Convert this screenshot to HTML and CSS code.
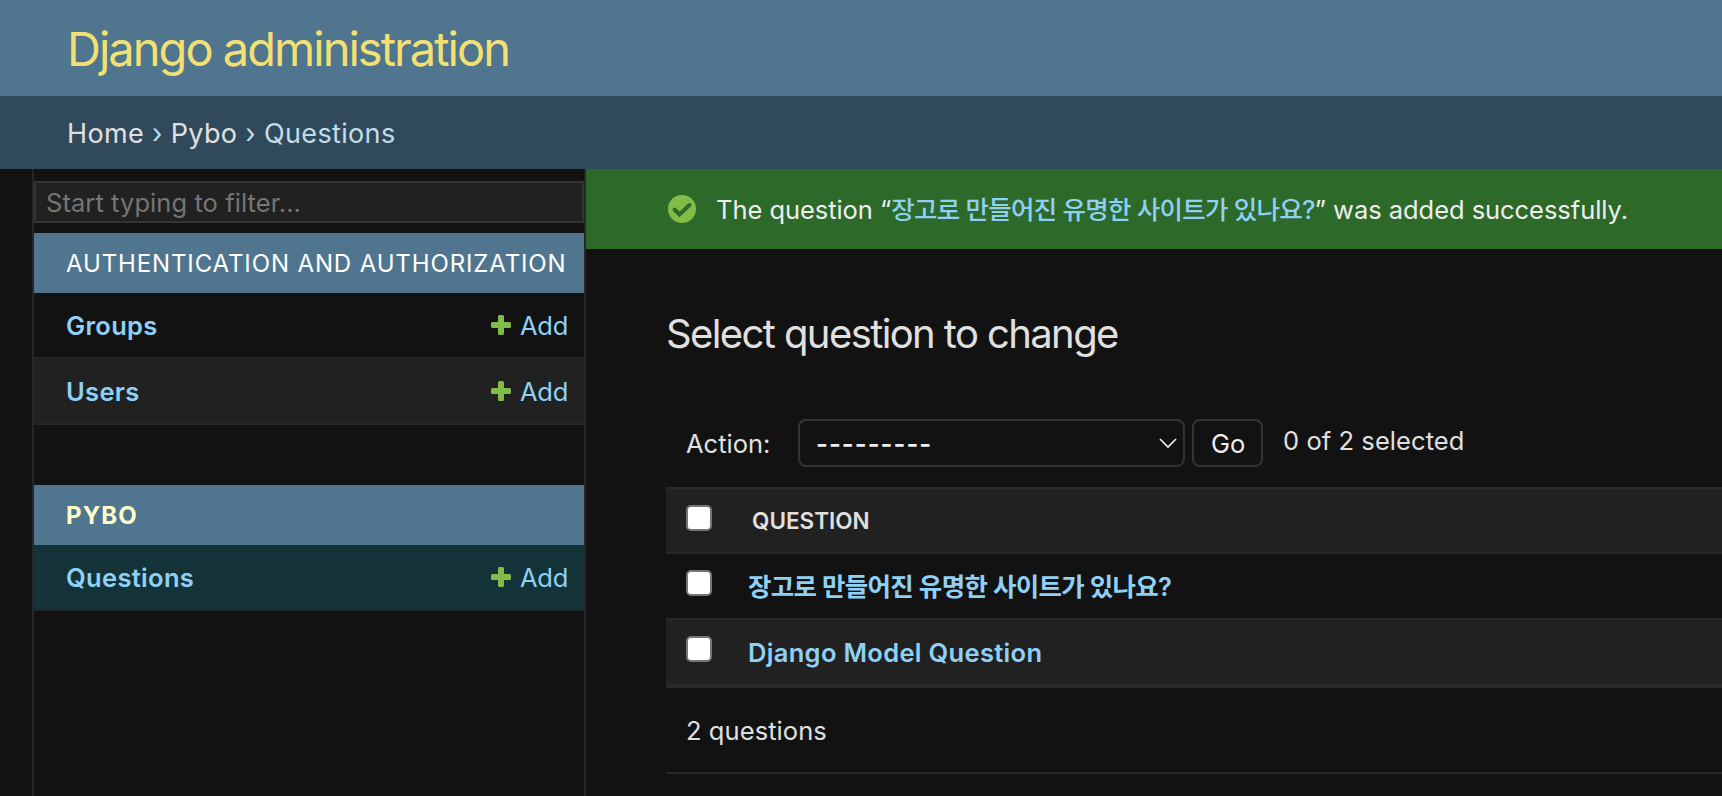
FILE: index.html
```html
<!DOCTYPE html>
<html lang="en">
<head>
<meta charset="utf-8">
<title>Select question to change</title>
<link rel="stylesheet" href="styles.css">
</head>
<body>
<header class="header"><h1 class="site-name">Django administration</h1></header>
<nav class="breadcrumbs"><a>Home</a> › <a>Pybo</a> › Questions</nav>
<div class="main">
  <aside class="sidebar">
    <div class="filter">Start typing to filter...</div>
    <section class="module">
      <h2 class="caption">AUTHENTICATION AND AUTHORIZATION</h2>
      <div class="model"><a class="name">Groups</a><a class="add"><svg class="plus" viewBox="0 0 20 20"><path d="M8.5 0h3q1.500 0 1.500 1.500V7h5.500q1.500 0 1.500 1.500v3q0 1.500-1.500 1.500H13v5.500q0 1.500-1.500 1.500h-3Q7 20 7 18.500V13H1.500Q0 13 0 11.500v-3Q0 7 1.500 7H7V1.500Q7 0 8.500 0z"/></svg><span>Add</span></a></div>
      <div class="model alt"><a class="name">Users</a><a class="add"><svg class="plus" viewBox="0 0 20 20"><path d="M8.5 0h3q1.500 0 1.500 1.500V7h5.500q1.500 0 1.500 1.500v3q0 1.500-1.500 1.500H13v5.500q0 1.500-1.500 1.500h-3Q7 20 7 18.500V13H1.500Q0 13 0 11.500v-3Q0 7 1.500 7H7V1.500Q7 0 8.500 0z"/></svg><span>Add</span></a></div>
    </section>
    <section class="module">
      <h2 class="caption current">PYBO</h2>
      <div class="model selected"><a class="name">Questions</a><a class="add"><svg class="plus" viewBox="0 0 20 20"><path d="M8.500 0h3q1.500 0 1.500 1.500V7h5.500q1.500 0 1.500 1.500v3q0 1.500-1.500 1.500H13v5.500q0 1.500-1.500 1.500h-3Q7 20 7 18.500V13H1.500Q0 13 0 11.500v-3Q0 7 1.500 7H7V1.500Q7 0 8.500 0z"/></svg><span>Add</span></a></div>
    </section>
  </aside>
  <main class="content">
    <div class="message"><svg class="tick" viewBox="0 0 28 28"><circle cx="14" cy="14" r="14"/><path d="M6.500 14.500l5 5L21.500 10"/></svg><p>The question “<a class="ko">장고로 만들어진 유명한 사이트가 있나요?</a>” was added successfully.</p></div>
    <div class="changelist">
      <h1 class="title">Select question to change</h1>
      <div class="actions">
        <span class="label">Action:</span>
        <div class="select"><span class="dashes">---------</span><svg class="chevron" viewBox="0 0 18 11"><path d="M1 1l8 8 8-8"/></svg></div>
        <div class="button">Go</div>
        <span class="counter">0 of 2 selected</span>
      </div>
      <div class="table">
        <div class="row head"><i class="check"></i><span class="cell">QUESTION</span></div>
        <div class="row"><i class="check"></i><a class="cell ko">장고로 만들어진 유명한 사이트가 있나요?</a></div>
        <div class="row alt"><i class="check"></i><a class="cell">Django Model Question</a></div>
      </div>
      <div class="paginator">2 questions</div>
    </div>
  </main>
</div>
</body>
</html>
```
FILE: styles.css
```css
* { box-sizing: border-box; }
body {
  margin: 0;
  height: 796px;
  overflow: hidden;
  display: flex;
  flex-direction: column;
  background: #121212;
  color: #e0e0e0;
  font-family: Inter, "Noto Sans CJK KR", sans-serif;
  font-size: 25.500px;
  font-weight: 430;
  line-height: 32px;
}
h1, h2, p { margin: 0; }
a, .add { color: #8fd0f5; }
span, a { white-space: nowrap; }

.header {
  height: 96px;
  padding: 18px 0 0 67px;
  background: #50758f;
  color: #f2e072;
}
.site-name { font-size: 47px; font-weight: 400; line-height: 61px; letter-spacing: -1.980px; }
.breadcrumbs {
  height: 73px;
  padding: 22px 0 0 67px;
  background: #304a5c;
  color: #c4dce8;
  font-size: 27px;
  letter-spacing: 0.350px;
}
.breadcrumbs a { color: #e0e0e0; }

.main { flex: 1; display: flex; }
.sidebar {
  width: 554px;
  margin-left: 32px;
  padding-top: 12px;
  border: solid #272727;
  border-width: 0 2px;
}
.filter {
  height: 42px;
  margin-bottom: 10px;
  padding: 4px 10px;
  border: 2px solid #343434;
  background: #212121;
  color: #757575;
  line-height: 31px;
  letter-spacing: 0.070px;
}
.module { margin-bottom: 60px; }
.caption {
  height: 60px;
  padding: 15px 0 0 32px;
  background: #50758f;
  color: #fff;
  font-size: 24px;
  font-weight: 400;
  letter-spacing: 0.870px;
  white-space: nowrap;
}
.current { color: #ffffcc; font-weight: 700; letter-spacing: 1.100px; }
.model {
  height: 66px;
  padding: 17px 16px 0 32px;
  border-bottom: 2px solid #272727;
  display: flex;
  justify-content: space-between;
}
.name { font-weight: 600; letter-spacing: 0.330px; }
.add { display: flex; gap: 9px; letter-spacing: -0.300px; }
.plus { width: 20px; height: 20px; margin-top: 5px; fill: #82bc48; }
.alt { background: #212121; }
.selected { background: #143338; }

.content { flex: 1; }
.message {
  height: 80px;
  padding: 25px 0 0 82px;
  display: flex;
  gap: 20px;
  background: #2d6929;
  color: #eee;
  letter-spacing: -0.050px;
}
.message .ko { font-weight: 500; letter-spacing: -0.720px; }
.tick { width: 28px; height: 28px; margin-top: 1px; fill: #82bc48; }
.tick path { fill: none; stroke: #2d6929; stroke-width: 4; stroke-linecap: round; }
.changelist { padding-left: 80px; }
.title { padding-top: 60px; font-size: 40px; font-weight: 400; line-height: 50px; letter-spacing: -1.600px; }
.actions {
  height: 128px;
  padding: 60px 0 0 20px;
  display: flex;
}
.label { width: 112px; padding-top: 9px; }
.select, .button {
  height: 48px;
  border: 2px solid #343434;
  border-radius: 8px;
  color: #eee;
}
.select { width: 387px; padding: 7px 6px 0 16px; display: flex; justify-content: space-between; }
.dashes { font-weight: 600; letter-spacing: 1.050px; }
.chevron { width: 18px; height: 11px; margin-top: 10px; fill: none; stroke: #eee; stroke-width: 1.700; }
.button { width: 71px; margin: 0 20px 0 7px; padding: 7px 0 0 17px; }
.counter { padding-top: 6px; letter-spacing: 0.070px; }
.row {
  height: 66px;
  padding: 16px 0 0 20px;
  display: flex;
  gap: 36px;
  border-bottom: 2px solid #292929;
}
.cell { margin-top: 1px; font-weight: 600; letter-spacing: 0.320px; }
.row .ko { letter-spacing: -0.690px; }
.head { height: 67px; gap: 40px; border-top: 2px solid #292929; background: #212121; font-size: 22.500px; }
.head .cell { margin-top: 0; letter-spacing: 0; }
.check { width: 26px; height: 26px; border: 2px solid #767676; border-radius: 5px; background: #fff; }
.paginator { height: 88px; padding: 27px 20px; border: solid #292929; border-width: 2px 0; letter-spacing: 0.070px; }
```
